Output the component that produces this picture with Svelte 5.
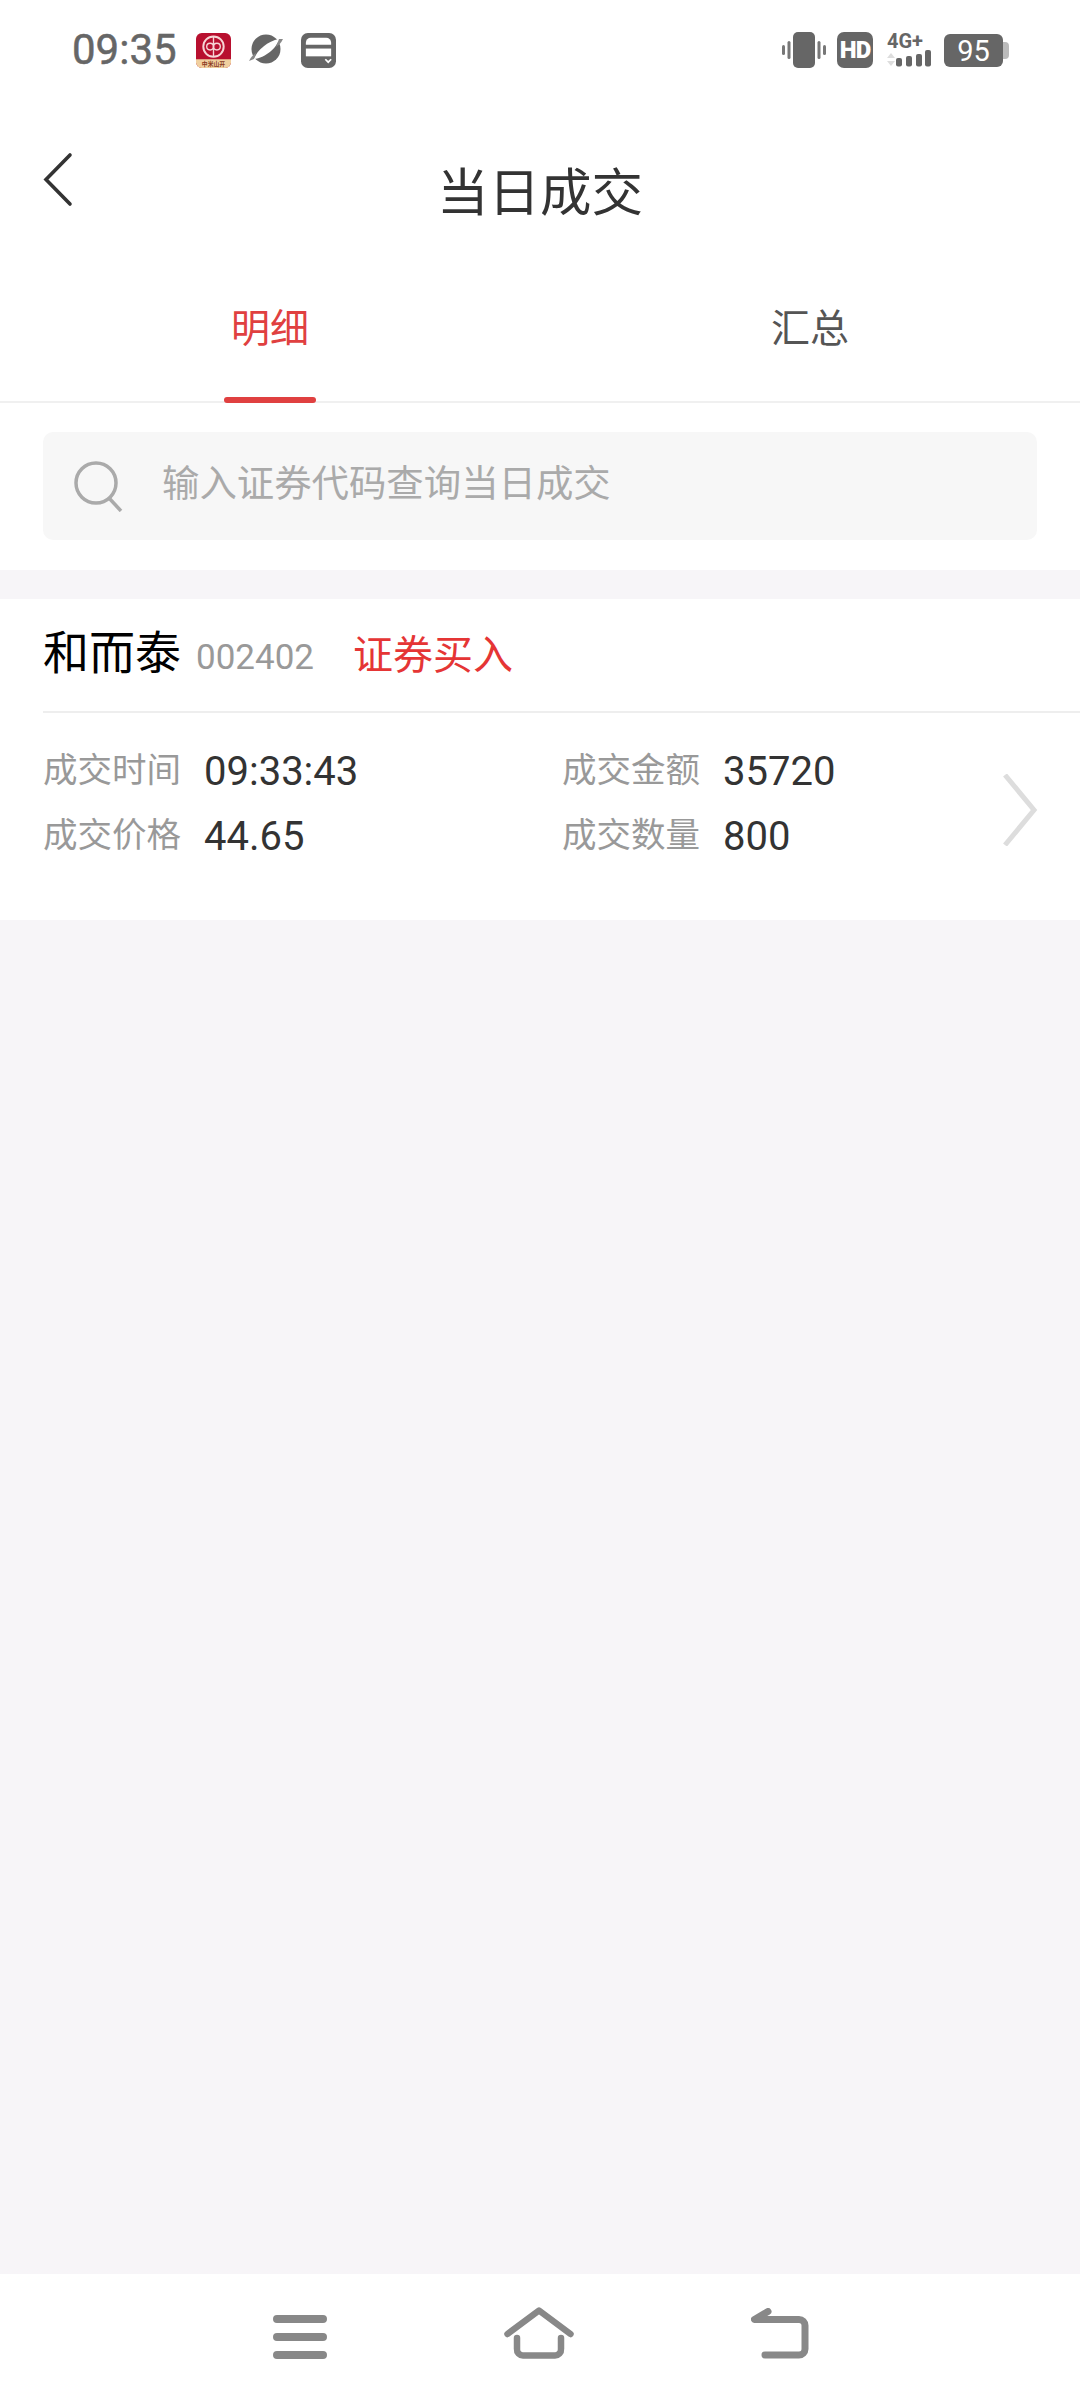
<script lang="ts">
  const details = [
    { label: "成交时间", value: "09:33:43" },
    { label: "成交金额", value: "35720" },
    { label: "成交价格", value: "44.65" },
    { label: "成交数量", value: "800" },
  ];
</script>

<div class="page">
  <div class="status-bar">
    <div class="status-left">
      <span class="time">09:35</span>
      <svg class="app-icon" width="35" height="35" viewBox="0 0 36 36">
        <rect width="36" height="36" rx="6" fill="#b8102f"></rect>
        <path d="M0 27h36v3a6 6 0 0 1-6 6H6a6 6 0 0 1-6-6z" fill="#f0cf9f"></path>
        <circle cx="18" cy="14" r="10.500" fill="none" stroke="#f6d5d5" stroke-width="2"></circle>
        <circle cx="14.500" cy="14" r="3.500" fill="none" stroke="#f6d5d5" stroke-width="1.400"></circle>
        <circle cx="21.500" cy="14" r="3.500" fill="none" stroke="#f6d5d5" stroke-width="1.400"></circle>
        <path d="M18 3.500v21" stroke="#f6d5d5" stroke-width="1.400"></path>
        <text class="app-label" x="18" y="34" text-anchor="middle">中米山开</text>
      </svg>
      <svg class="planet" width="36" height="36" viewBox="0 0 36 36">
        <circle cx="18" cy="17" r="14.500" fill="#666"></circle>
        <path d="M6 27C9 18 20 9 31 7C29 16 17 26 6 27z" fill="#fff"></path>
        <path d="M1 29C3 25 5 23 8 21L6 27z" fill="#888"></path>
        <path d="M35 7C33 11 31 13 28 15L31 7z" fill="#888"></path>
      </svg>
      <svg class="card-icon" width="35" height="35" viewBox="0 0 36 36">
        <rect width="36" height="36" rx="7" fill="#666"></rect>
        <path d="M5 10a5 5 0 0 1 5-5h16a5 5 0 0 1 5 5v2H5z" fill="#fff"></path>
        <rect x="5" y="16" width="26" height="8" fill="#fff"></rect>
        <path d="M25 27l3 3 3-3" fill="none" stroke="#fff" stroke-width="1.800"></path>
      </svg>
    </div>
    <div class="status-right">
      <svg width="44" height="36" viewBox="0 0 44 36">
        <rect x="11" y="0" width="22" height="36" rx="5" fill="#666"></rect>
        <rect x="5.500" y="9" width="3" height="18" rx="1.500" fill="#777"></rect>
        <rect x="35.500" y="9" width="3" height="18" rx="1.500" fill="#777"></rect>
        <rect x="0" y="13" width="3" height="10" rx="1.500" fill="#777"></rect>
        <rect x="41" y="13" width="3" height="10" rx="1.500" fill="#777"></rect>
      </svg>
      <div class="hd">HD</div>
      <div class="signal">
        <span class="net">4G+</span>
        <svg width="46" height="18" viewBox="0 0 46 18">
          <path d="M4 3l4 5H0z" fill="#ddd"></path>
          <path d="M4 16l4-5H0z" fill="#ddd"></path>
          <rect x="9" y="8" width="6" height="8.500" rx="2" fill="#666"></rect>
          <rect x="19" y="6" width="6" height="10.500" rx="2" fill="#666"></rect>
          <rect x="29" y="4" width="6" height="12.500" rx="2" fill="#666"></rect>
          <rect x="38" y="0" width="6" height="16.500" rx="2" fill="#666"></rect>
        </svg>
      </div>
      <div class="battery">
        <span class="level">95</span>
        <span class="cap"></span>
      </div>
    </div>
  </div>

  <header class="nav">
    <svg class="back" width="32" height="56" viewBox="0 0 32 56">
      <path d="M27 3L3 27.500L27 52" fill="none" stroke="#333" stroke-width="3.600" stroke-linecap="round"></path>
    </svg>
    <h1>当日成交</h1>
  </header>

  <div class="tabs">
    <div class="tab active">明细<span class="ink"></span></div>
    <div class="tab">汇总</div>
  </div>

  <div class="search-wrap">
    <div class="search">
      <svg width="52" height="52" viewBox="0 0 52 52">
        <circle cx="24" cy="23" r="20" fill="none" stroke="#aaa" stroke-width="3.500"></circle>
        <path d="M37 38l12 13" fill="none" stroke="#aaa" stroke-width="3.500"></path>
      </svg>
      <span class="placeholder">输入证券代码查询当日成交</span>
    </div>
  </div>

  <section class="trade">
    <div class="trade-head">
      <span class="name">和而泰</span>
      <span class="code">002402</span>
      <span class="side">证券买入</span>
    </div>
    <div class="trade-body">
      <div class="grid">
        {#each details as d}
          <div class="cell">
            <span class="label">{d.label}</span>
            <span class="value">{d.value}</span>
          </div>
        {/each}
      </div>
      <svg class="more" width="36" height="72" viewBox="0 0 36 72">
        <path d="M3 1L32 36L3 71" fill="none" stroke="#ddd" stroke-width="5"></path>
      </svg>
    </div>
  </section>

  <div class="spacer"></div>

  <nav class="bottom">
    <svg width="54" height="44" viewBox="0 0 54 44">
      <g fill="none" stroke="#888" stroke-width="8" stroke-linecap="round">
        <path d="M4 4h46M4 22h46M4 40h46"></path>
      </g>
    </svg>
    <svg width="70" height="52" viewBox="0 0 70 52">
      <g fill="none" stroke="#888" stroke-width="6.500" stroke-linecap="round" stroke-linejoin="round">
        <path d="M3.500 27L35 3.500L66.500 27"></path>
        <path d="M13 31v11a6 6 0 0 0 6 6.500h32a6 6 0 0 0 6-6.500V31"></path>
      </g>
    </svg>
    <svg width="58" height="51" viewBox="0 0 58 51">
      <g fill="none" stroke="#888" stroke-width="7" stroke-linecap="round" stroke-linejoin="round">
        <path d="M17 3.500L3.500 11.500H48a6 6 0 0 1 6 6V41a6 6 0 0 1-6 6H14"></path>
      </g>
    </svg>
  </nav>
</div>

<style>
  :global(body) {
    margin: 0;
    background: #f7f5f8;
  }

  .page {
    width: 1080px;
    height: 2400px;
    display: flex;
    flex-direction: column;
    background: #f7f5f8;
    font-family: Roboto, "Noto Sans CJK SC", sans-serif;
    overflow: hidden;
  }

  .status-bar {
    height: 100px;
    background: #fff;
    display: flex;
    justify-content: space-between;
    align-items: center;
    padding: 0 77px 0 72px;
    box-sizing: border-box;
  }

  .status-left {
    display: flex;
    align-items: center;
    gap: 17px;
  }

  .time {
    font-size: 42px;
    font-weight: 400;
    -webkit-text-stroke: 0.5px #666;
    color: #666;
    margin-right: 2px;
    line-height: 50px;
  }

  .app-label {
    font-size: 6px;
    fill: #8a3a22;
    font-weight: 700;
  }

  .status-right {
    display: flex;
    align-items: center;
    gap: 11px;
  }

  .hd {
    width: 36px;
    height: 36px;
    border-radius: 7px;
    background: #666;
    color: #fff;
    font-size: 24px;
    font-weight: 900;
    line-height: 36px;
    text-align: center;
    letter-spacing: -1px;
  }

  .signal {
    display: flex;
    flex-direction: column;
    width: 46px;
    height: 36px;
    margin-left: 3px;
  }

  .net {
    font-size: 20px;
    font-weight: 700;
    line-height: 18px;
    color: #666;
  }

  .battery {
    position: relative;
    width: 59px;
    height: 33px;
    border-radius: 6px;
    background: #666;
    color: #fff;
    text-align: center;
    font-size: 29px;
    line-height: 34px;
  }

  .cap {
    position: absolute;
    left: 59px;
    top: 8px;
    width: 6px;
    height: 17px;
    border-radius: 0 4px 4px 0;
    background: #bbb;
  }

  .nav {
    position: relative;
    height: 170px;
    background: #fff;
    display: flex;
    justify-content: center;
  }

  .nav h1 {
    margin: 0;
    padding-top: 62px;
    font-size: 51.500px;
    font-weight: 400;
    line-height: 64px;
    color: #333;
  }

  .back {
    position: absolute;
    left: 43px;
    top: 52px;
  }

  .tabs {
    height: 131px;
    background: #fff;
    display: flex;
    border-bottom: 2px solid #f0f0f0;
  }

  .tab {
    position: relative;
    flex: 1;
    text-align: center;
    font-size: 39px;
    line-height: 50px;
    padding-top: 34px;
    color: #555;
  }

  .tab.active {
    color: #e04040;
  }

  .ink {
    position: absolute;
    left: 224px;
    bottom: -2px;
    width: 92px;
    height: 6px;
    border-radius: 3px;
    background: #e04040;
  }

  .search-wrap {
    background: #fff;
    padding: 29px 43px 30px;
  }

  .search {
    height: 108px;
    border-radius: 10px;
    background: #f7f7f7;
    display: flex;
    align-items: center;
    padding-left: 29px;
    gap: 38px;
  }

  .placeholder {
    font-size: 37.400px;
    line-height: 50px;
    margin-top: -5px;
    color: #aaa;
  }

  .trade {
    margin-top: 29px;
    background: #fff;
    height: 321px;
  }

  .trade-head {
    margin-left: 43px;
    height: 112px;
    display: flex;
    align-items: center;
    border-bottom: 2px solid #eee;
  }

  .name {
    font-size: 46px;
    line-height: 60px;
    margin-top: -4px;
    color: #000;
  }

  .code {
    font-size: 35px;
    color: #999;
    margin-left: 15px;
    margin-top: 4px;
  }

  .side {
    font-size: 40px;
    line-height: 56px;
    margin-top: 1px;
    color: #e53535;
    margin-left: 39px;
  }

  .trade-body {
    display: flex;
    align-items: center;
    padding: 33px 42px 0 43px;
  }

  .grid {
    flex: 1;
    display: grid;
    grid-template-columns: 519px 1fr;
    row-gap: 14px;
  }

  .cell {
    display: flex;
    align-items: center;
    gap: 23px;
    height: 51px;
  }

  .label {
    font-size: 34.500px;
    line-height: 46px;
    margin-top: -4px;
    color: #999;
  }

  .value {
    font-size: 40px;
    color: #333;
  }

  .more {
    margin-top: 12px;
  }

  .spacer {
    flex: 1;
  }

  .bottom {
    height: 126px;
    background: #fff;
    display: flex;
    align-items: flex-end;
    justify-content: center;
    gap: 177px;
    padding: 0 0 41px 2px;
    box-sizing: border-box;
  }
</style>
